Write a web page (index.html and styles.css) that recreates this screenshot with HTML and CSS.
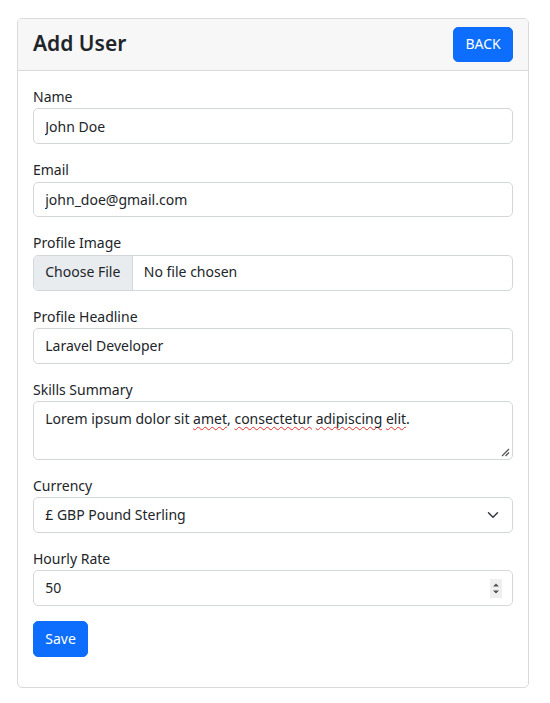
FILE: index.html
```html
<!DOCTYPE html>
<html lang="en">
<head>
<meta charset="utf-8">
<title>Add User</title>
<link rel="stylesheet" href="styles.css">
</head>
<body>
<div class="page">
  <div class="card">
    <div class="card-header">
      <h4 class="title">Add User</h4>
      <a class="btn btn-primary" href="#">BACK</a>
    </div>
    <form class="card-body">
      <div class="group">
        <label class="label" for="name">Name</label>
        <input class="control" id="name" type="text" value="John Doe">
      </div>
      <div class="group">
        <label class="label" for="email">Email</label>
        <input class="control" id="email" type="text" value="john_doe@gmail.com">
      </div>
      <div class="group">
        <label class="label">Profile Image</label>
        <div class="control file">
          <span class="file-btn">Choose File</span>
          <span class="file-name">No file chosen</span>
        </div>
      </div>
      <div class="group">
        <label class="label" for="headline">Profile Headline</label>
        <input class="control" id="headline" type="text" value="Laravel Developer">
      </div>
      <div class="group">
        <label class="label">Skills Summary</label>
        <div class="control textarea">Lorem ipsum dolor sit <span class="spell">amet</span>, <span class="spell">consectetur</span> <span class="spell">adipiscing</span> <span class="spell">elit</span>.<svg class="grip" width="10" height="10" viewBox="0 0 10 10"><path d="M9 2 L2 9 M9 5.5 L5.5 9" stroke="#555" stroke-width="1.3" fill="none"/></svg></div>
      </div>
      <div class="group">
        <label class="label">Currency</label>
        <div class="control select">
          <span>£ GBP Pound Sterling</span>
          <svg class="chevron" width="16" height="12" viewBox="0 0 16 16"><path d="M2 5l6 6 6-6" stroke="#343a40" stroke-width="2" fill="none" stroke-linecap="round" stroke-linejoin="round"/></svg>
        </div>
      </div>
      <div class="group">
        <label class="label">Hourly Rate</label>
        <div class="control number">
          <span>50</span>
          <svg class="spinner" width="12" height="19" viewBox="0 0 12 19"><rect width="12" height="19" fill="#efefef"/><path d="M3 7.5 L6 4.5 L9 7.5 Z M3 11.5 L6 14.5 L9 11.5 Z" fill="#505050"/></svg>
        </div>
      </div>
      <div class="actions">
        <button class="btn btn-primary" type="button">Save</button>
      </div>
    </form>
  </div>
</div>
</body>
</html>
```
FILE: styles.css
```css
* { box-sizing: border-box; }
html, body { margin: 0; padding: 0; background: #fff; }
body {
  font-family: "Noto Sans", "Open Sans", sans-serif;
  font-size: 14px;
  line-height: 22.5px;
  color: #212529;
}
.page { padding: 18px 21px 16px 17px; }
.card {
  border: 1px solid #d9dadb;
  border-radius: 5px;
  background: #fff;
  overflow: hidden;
}
.card-header {
  display: flex;
  justify-content: space-between;
  align-items: flex-start;
  padding: 7.5px 15px;
  background: #f7f7f7;
  border-bottom: 1px solid #d9dadb;
}
.title {
  margin: 0;
  font-size: 21px;
  line-height: 27px;
  font-weight: 600;
  padding-top: 3px;
}
.btn {
  display: inline-block;
  font-family: inherit;
  font-size: 14px;
  line-height: 22.5px;
  height: 35.75px;
  padding: 5.625px 11.25px;
  border: 1px solid #0d6efd;
  border-radius: 5px;
  background: #0d6efd;
  color: #fff;
  text-decoration: none;
  cursor: pointer;
}
.card-body { display: block; padding: 15px; }
.group { margin-bottom: 15px; }
.label { display: block; line-height: 22.5px; }
.control {
  display: block;
  width: 100%;
  height: 35.75px;
  padding: 5.625px 11.25px;
  font-family: inherit;
  font-size: 14px;
  line-height: 22.5px;
  color: #212529;
  background: #fff;
  border: 1px solid #d4d7da;
  border-radius: 5px;
  outline: none;
}
.file {
  display: flex;
  align-items: center;
  padding: 0;
  overflow: hidden;
}
.file-btn {
  align-self: stretch;
  display: flex;
  align-items: center;
  padding: 0 11.25px;
  background: #e9ecef;
  border-right: 1px solid #d4d7da;
}
.file-name { padding-left: 11.25px; }
.textarea {
  position: relative;
  height: 58.25px;
}
.spell {
  text-decoration: underline wavy #e03030;
  text-decoration-thickness: 1px;
  text-underline-offset: 2px;
  text-decoration-skip-ink: none;
}
.grip { position: absolute; right: 2px; bottom: 2px; }
.select, .number {
  display: flex;
  align-items: center;
  justify-content: space-between;
}
.spinner { margin-right: -1px; }
.actions { margin-bottom: 15px; }
```
